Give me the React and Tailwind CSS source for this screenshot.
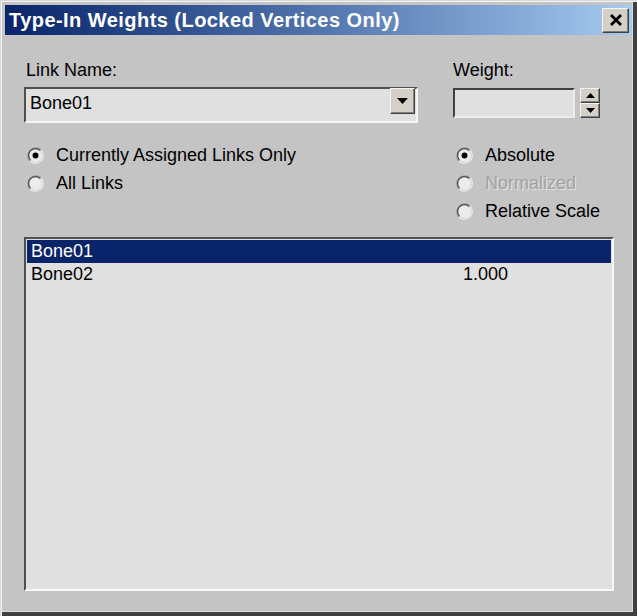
import React from "react";

function Radio({ checked }) {
  return (
    <svg width="17" height="17" viewBox="0 0 16 16" className="shrink-0">
      <circle cx="8" cy="8" r="6.5" fill="#ececec" />
      <path d="M2.7 13.3 A7.5 7.5 0 0 1 13.3 2.7" stroke="#9a9a9a" strokeWidth="1" fill="none" />
      <path d="M13.3 2.7 A7.5 7.5 0 0 1 2.7 13.3" stroke="#f4f4f4" strokeWidth="1" fill="none" />
      <path d="M3.4 12.6 A6.5 6.5 0 0 1 12.6 3.4" stroke="#4a4a4a" strokeWidth="1.2" fill="none" />
      <path d="M12.6 3.4 A6.5 6.5 0 0 1 3.4 12.6" stroke="#d8d8d8" strokeWidth="1" fill="none" />
      {checked && <circle cx="8" cy="8" r="2.8" fill="#000" />}
    </svg>
  );
}

function RadioRow({ checked, label, disabled }) {
  return (
    <div className="flex h-[28px] items-center">
      <div className="ml-[3px] mr-[12px]">
        <Radio checked={checked} />
      </div>
      <span
        className={
          disabled
            ? "leading-[20px] text-[#a2a2a2] [text-shadow:1px_1px_0_#e6e6e6]"
            : "leading-[20px] text-black"
        }
      >
        {label}
      </span>
    </div>
  );
}

const raised =
  "bg-[#d4d0c8] border border-t-[#f4f4f4] border-l-[#f4f4f4] border-r-[#404040] border-b-[#404040] shadow-[inset_-1px_-1px_0_#808080]";

export default function App() {
  return (
    <div className="w-[637px] h-[616px] flex flex-col bg-[#c4c4c4] pl-[5px] pt-[5px] pr-[5px] pb-[5px] shadow-[inset_1px_1px_0_#d8d8d8,inset_2px_2px_0_#f4f4f4,inset_-4px_-4px_0_#404040,inset_-5px_-5px_0_#dedede] font-['Liberation_Sans',Arial,sans-serif] text-[18px] text-black">
      {/* Title bar */}
      <div className="h-[30px] shrink-0 flex items-center pl-[4px] pr-[3px] bg-gradient-to-r from-[#0a246a] to-[#a6caf0]">
        <span className="text-white font-bold text-[20px] leading-[30px] tracking-[0.45px] whitespace-nowrap">
          Type-In Weights (Locked Vertices Only)
        </span>
        <div className={"ml-auto w-[27px] h-[25px] flex items-center justify-center " + raised}>
          <svg width="14" height="12" viewBox="0 0 14 12">
            <path d="M2 1 L12 11 M12 1 L2 11" stroke="#000" strokeWidth="2.8" strokeLinecap="butt" />
          </svg>
        </div>
      </div>

      {/* Body */}
      <div className="flex-1 flex flex-col pl-[19px] pr-[18px] pt-[25px] pb-[20px]">
        <div className="flex">
          <div className="w-[394px] flex flex-col">
            <div className="h-[20px] leading-[20px] pl-[2px]">Link Name:</div>
            <div className="mt-[7px] h-[36px] flex items-start bg-[#e0e0e0] border-2 border-t-[#505050] border-l-[#505050] border-r-[#f4f4f4] border-b-[#f4f4f4]">
              <span className="pl-[4px] pt-[4px] leading-[20px]">Bone01</span>
              <div className={"ml-auto mr-[1px] mt-[-1px] w-[25px] h-[26px] flex items-center justify-center " + raised}>
                <svg width="11" height="6" viewBox="0 0 11 6">
                  <path d="M0 0 H11 L5.5 6 Z" fill="#000" />
                </svg>
              </div>
            </div>
          </div>
          <div className="ml-[35px] flex flex-col">
            <div className="h-[20px] leading-[20px]">Weight:</div>
            <div className="mt-[8px] flex">
              <div className="w-[122px] h-[30px] bg-[#e0e0e0] border-2 border-t-[#404040] border-l-[#404040] border-r-[#ececec] border-b-[#ececec]" />
              <div className="ml-[5px] w-[20px] h-[30px] flex flex-col">
                <div className={"h-[15px] flex items-center justify-center " + raised}>
                  <svg width="9" height="5" viewBox="0 0 9 5">
                    <path d="M0 5 H9 L4.5 0 Z" fill="#000" />
                  </svg>
                </div>
                <div className={"h-[15px] flex items-center justify-center " + raised}>
                  <svg width="9" height="5" viewBox="0 0 9 5">
                    <path d="M0 0 H9 L4.5 5 Z" fill="#000" />
                  </svg>
                </div>
              </div>
            </div>
          </div>
        </div>

        <div className="mt-[18px] flex">
          <div className="w-[394px] flex flex-col">
            <RadioRow checked label="Currently Assigned Links Only" />
            <RadioRow label="All Links" />
          </div>
          <div className="ml-[35px] flex flex-col">
            <RadioRow checked label="Absolute" />
            <RadioRow disabled label="Normalized" />
            <RadioRow label="Relative Scale" />
          </div>
        </div>

        <div className="mt-[12px] flex-1 bg-[#e0e0e0] border-2 border-t-[#505050] border-l-[#505050] border-r-[#f8f8f8] border-b-[#f8f8f8] p-[1px]">
          <div className="h-[23px] grid grid-cols-[431px_1fr] pl-[4px] bg-[#0a246a] text-white leading-[23px]">
            <span>Bone01</span>
            <span></span>
          </div>
          <div className="h-[23px] grid grid-cols-[432px_1fr] pl-[4px] leading-[23px]">
            <span>Bone02</span>
            <span>1.000</span>
          </div>
        </div>
      </div>
    </div>
  );
}
